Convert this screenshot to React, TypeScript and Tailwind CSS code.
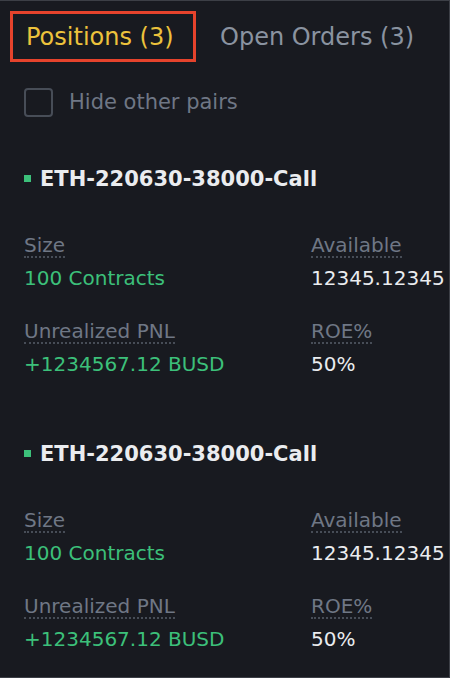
import type { ReactNode } from 'react';

const font = { fontFamily: '"DejaVu Sans", "Liberation Sans", sans-serif' };

interface Position {
  symbol: string;
  size: string;
  available: string;
  pnl: string;
  roe: string;
}

const positions: Position[] = [
  {
    symbol: 'ETH-220630-38000-Call',
    size: '100 Contracts',
    available: '12345.12345',
    pnl: '+1234567.12 BUSD',
    roe: '50%',
  },
  {
    symbol: 'ETH-220630-38000-Call',
    size: '100 Contracts',
    available: '12345.12345',
    pnl: '+1234567.12 BUSD',
    roe: '50%',
  },
];

function Field({ label, children, green }: { label: string; children: ReactNode; green?: boolean }) {
  return (
    <div className="flex flex-col items-start">
      <span className="h-[24px] border-b-2 border-dotted border-[#474d57] text-[20px] leading-[22px] text-[#6f7785]">
        {label}
      </span>
      <span
        className={`mt-[8px] text-[20px] leading-[24px] whitespace-nowrap ${
          green ? 'text-[#3cc07a]' : 'text-[#eaecef]'
        }`}
      >
        {children}
      </span>
    </div>
  );
}

function PositionCard({ p }: { p: Position }) {
  return (
    <div className="pl-[24px]">
      <div className="flex h-[30px] items-center">
        <span className="h-[7px] w-[7px] bg-[#3cc07a]" />
        <span className="ml-[9px] text-[21px] font-bold leading-[30px] text-[#eaecef]">{p.symbol}</span>
      </div>
      <div className="mt-[40px] grid grid-cols-[287px_1fr] gap-y-[30px]">
        <Field label="Size" green>
          {p.size}
        </Field>
        <Field label="Available">{p.available}</Field>
        <Field label="Unrealized PNL" green>
          {p.pnl}
        </Field>
        <Field label="ROE%">{p.roe}</Field>
      </div>
    </div>
  );
}

export default function App() {
  return (
    <div
      className="h-[678px] w-[450px] overflow-hidden border-y border-r border-[#3c3f46] bg-[#181a20]"
      style={font}
    >
      <div className="flex items-center pl-[10px] pt-[10px]">
        <div className="flex h-[51px] w-[186px] items-center border-[3px] border-[#e5432c] pl-[13px]">
          <span className="text-[24px] text-[#ecc23c]">Positions (3)</span>
        </div>
        <span className="ml-[24px] text-[24px] text-[#8a93a0]">Open Orders (3)</span>
      </div>

      <div className="mt-[25px] flex items-center pl-[24px]">
        <span className="h-[29px] w-[29px] rounded-[4px] border-2 border-[#474d57]" />
        <span className="ml-[16px] text-[21px] text-[#6f7785]">Hide other pairs</span>
      </div>

      <div className="mt-[45px] flex flex-col gap-[63px]">
        {positions.map((p, i) => (
          <PositionCard key={i} p={p} />
        ))}
      </div>
    </div>
  );
}
